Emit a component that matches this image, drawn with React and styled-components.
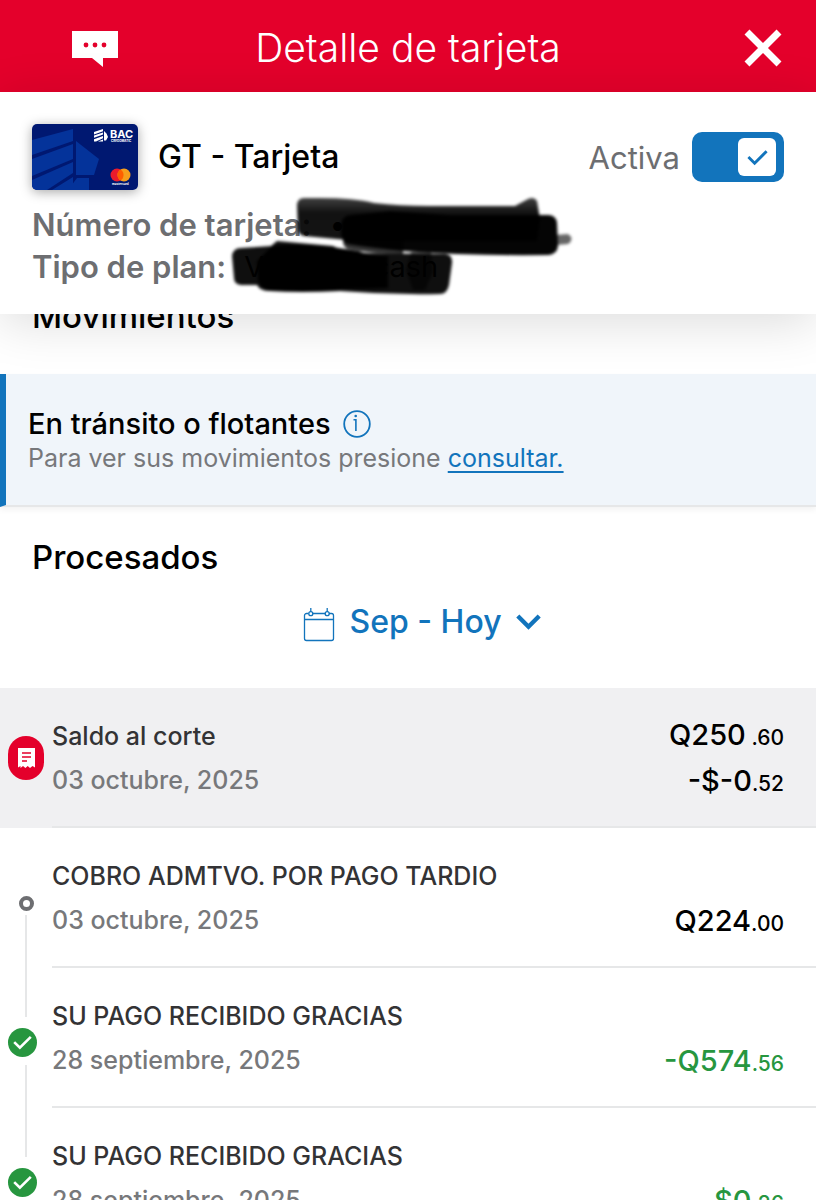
import React, { useState } from "react";
import styled, { createGlobalStyle, css } from "styled-components";

const movements = [
  {
    id: 1,
    kind: "cut",
    title: "Saldo al corte",
    date: "03 octubre, 2025",
    amounts: [
      ["Q250", " .60"],
      ["-$-0", ".52"],
    ],
  },
  {
    id: 2,
    kind: "charge",
    title: "COBRO ADMTVO. POR PAGO TARDIO",
    date: "03 octubre, 2025",
    amounts: [["Q224", ".00"]],
  },
  {
    id: 3,
    kind: "payment",
    title: "SU PAGO RECIBIDO GRACIAS",
    date: "28 septiembre, 2025",
    amounts: [["-Q574", ".56"]],
  },
  {
    id: 4,
    kind: "payment",
    title: "SU PAGO RECIBIDO GRACIAS",
    date: "28 septiembre, 2025",
    amounts: [["$0", ".26"]],
  },
];

// Icons
const ChatIcon = () => (
  <svg width="46" height="38" viewBox="0 0 46 38" aria-hidden="true">
    <path d="M0 2h46v27H31v9L20 29H0z" fill="#fff" />
    <g fill="#e4002b">
      <circle cx="14" cy="16" r="2.4" />
      <circle cx="23" cy="16" r="2.4" />
      <circle cx="32" cy="16" r="2.4" />
    </g>
  </svg>
);

const CloseIcon = () => (
  <svg width="38" height="38" viewBox="0 0 38 38" aria-hidden="true">
    <path d="M3 3l32 32M35 3L3 35" stroke="#fff" strokeWidth="7" />
  </svg>
);

const InfoIcon = () => (
  <svg width="28" height="28" viewBox="0 0 28 28" fill="none" aria-hidden="true">
    <circle cx="14" cy="14" r="12.8" stroke="#1274bc" strokeWidth="1.8" />
    <path d="M10.5 9.7h2.4V21" stroke="#1274bc" strokeWidth="1.6" />
    <circle cx="12.7" cy="6" r="1.3" fill="#1274bc" />
  </svg>
);

const CalendarIcon = () => (
  <svg
    width="32"
    height="40"
    viewBox="0 -6 32 40"
    fill="none"
    stroke="#1274bc"
    strokeWidth="1.3"
    aria-hidden="true"
  >
    <path d="M5.5 5.5h-2a2 2 0 0 0-2 2v23a2 2 0 0 0 2 2h25a2 2 0 0 0 2-2v-23a2 2 0 0 0-2-2h-2.5M9.5 5.5h13M1.5 11.5h29M7.8 0v4M24.2 0v4" />
    <circle cx="7.8" cy="5.7" r="2" />
    <circle cx="24.2" cy="5.7" r="2" />
  </svg>
);

const ChevronIcon = () => (
  <svg width="25" height="16" viewBox="0 0 25 16" fill="none" aria-hidden="true">
    <path d="M1.8 2l10.700 10.700L23.200 2" stroke="#1274bc" strokeWidth="4.4" />
  </svg>
);

const CheckIcon = ({ size, color, width }) => (
  <svg width={size} height={size} viewBox="0 0 24 24" fill="none" aria-hidden="true">
    <path d="M2.500 11.500l6.500 6.500L21.500 5.500" stroke={color} strokeWidth={width} />
  </svg>
);

const ReceiptIcon = () => (
  <svg width="17" height="22" viewBox="0 0 17 22" aria-hidden="true">
    <path
      d="M0 1h17v19.500l-2.500-1.500-2.500 2-2.300-2-2.300 2-2.400-2-2.500 2L2.500 19 0 20.500z"
      fill="#fff"
    />
    <path d="M4 6h9M4 10h9M4 14h5" stroke="#e4002b" strokeWidth="1.500" />
  </svg>
);

const CardArt = () => (
  <svg width="106" height="66" viewBox="0 0 106 66" role="img" aria-label="BAC">
    <defs>
      <clipPath id="card">
        <rect width="106" height="66" rx="5" />
      </clipPath>
    </defs>
    <g clipPath="url(#card)">
      <rect width="106" height="66" fill="#001871" />
      <g fill="#04339a">
        <path d="M0 16L41 5v12L0 31z" />
        <path d="M0 35l41-15v15L0 52z" />
        <path d="M0 56l41-18v11L15 66H0z" />
        <path d="M44 17l23 18-5 16H44z" />
        <path d="M20 66l21-13v13zM45 54h12v12H36z" />
      </g>
      <g fill="#fff">
        <path d="M62 8l9-3v2.200l-9 3.200zM62 11.600l9-3.200v2.200l-9 3.200zM62 15.200l9-3.200v2.200l-7 3.200h-2z" />
        <path d="M72 7l2.500 2.500L76 13l-2 3.500h-2zM66 17.500l5-2v2z" />
        <text
          x="78"
          y="14"
          fontFamily="Inter, sans-serif"
          fontSize="11"
          fontWeight="700"
        >
          BAC
        </text>
        <text x="79" y="18" fontFamily="Inter, sans-serif" fontSize="3" fontWeight="700">
          CREDOMATIC
        </text>
        <text x="80" y="61" fontFamily="Inter, sans-serif" fontSize="3" fontWeight="700">
          mastercard
        </text>
      </g>
      <circle cx="85" cy="51" r="6.500" fill="#eb1c2c" />
      <circle cx="92" cy="51" r="6.500" fill="#f79e1b" />
      <path d="M88.500 45.500a6.500 6.500 0 0 1 0 11a6.500 6.500 0 0 1 0-11z" fill="#ff5f00" />
    </g>
  </svg>
);

// Marker strokes that hide the private values
const Redaction = () => (
  <Scribble width="360" height="112" viewBox="0 0 360 112" aria-hidden="true">
    <defs>
      <filter id="soft" x="-5%" y="-10%" width="110%" height="120%">
        <feGaussianBlur stdDeviation="1.6" />
      </filter>
      <linearGradient id="ink" x1="0" y1="0" x2="0" y2="1">
        <stop offset="0" stopOpacity="0.75" />
        <stop offset="0.35" stopOpacity="0.93" />
        <stop offset="1" stopOpacity="0.92" />
      </linearGradient>
    </defs>
    <g filter="url(#soft)">
      <path
        d="M76 8h16q34 0 54 5 25 3 55 3h86l13-7q6-3 9 2l3 18-3 22H130l-54-5q-5-1-6-6l-1-24q0-8 7-8z"
        fill="url(#ink)"
      />
      <path d="M115 44h60v20q-30 0-55-5-5-2-5-8z" opacity="0.8" />
      <path d="M328 45l12-1q7 5 0 10l-12 1z" opacity="0.6" />
      <path
        d="M122 25l40-4 60 4h98q8 0 9 8l1 23q-1 8-9 9-80 1-146-4-30-3-56-7-7-2-6-20 1-8 9-9z"
        opacity="0.98"
      />
      <path
        d="M13 58l30-2 6-5 56 5 14 7 98 1q8 1 7 9l-3 22q-2 9-9 9-50 1-100-3-40 2-70 0-10 0-13-6H13q-7-1-7-7l-2-22q1-8 9-8z"
        opacity="0.94"
      />
      <path d="M44 56q28-3 60 1l26 4q8 4 30 5v32q-24 1-45 1-8 2-18 2H45q-12-1-15-10l-1-20z" />
      <path d="M183 62h20l2 20-8 18h-12l-7-20z" opacity="0.6" />
    </g>
  </Scribble>
);

const Marker = ({ kind }) => {
  if (kind === "cut") {
    return (
      <CutBadge>
        <ReceiptIcon />
      </CutBadge>
    );
  }
  if (kind === "payment") {
    return (
      <PaidBadge>
        <CheckIcon size={21} color="#fff" width={3} />
      </PaidBadge>
    );
  }
  return <Dot />;
};

const Movement = ({ kind, title, date, amounts }) => (
  <Row $shaded={kind === "cut"}>
    <Rail $kind={kind}>
      <Marker kind={kind} />
      {kind !== "cut" && <Line $long={kind === "charge"} />}
    </Rail>
    <RowBody>
      <div>
        <RowTitle>{title}</RowTitle>
        <RowDate>{date}</RowDate>
      </div>
      <Amounts $green={kind === "payment"}>
        {amounts.map(([whole, cents]) => (
          <Amount key={whole}>
            {whole}
            <small>{cents}</small>
          </Amount>
        ))}
      </Amounts>
    </RowBody>
  </Row>
);

export default function App() {
  const [active, setActive] = useState(true);

  return (
    <Screen>
      <GlobalStyle />
      <TopBar>
        <IconBtn aria-label="Chat">
          <ChatIcon />
        </IconBtn>
        <h1>Detalle de tarjeta</h1>
        <IconBtn aria-label="Cerrar">
          <CloseIcon />
        </IconBtn>
      </TopBar>

      <CardPanel>
        <CardHead>
          <CardThumb>
            <CardArt />
          </CardThumb>
          <h2>GT - Tarjeta</h2>
          <SwitchLabel>
            Activa
            <Switch
              type="checkbox"
              role="switch"
              checked={active}
              onChange={() => setActive(!active)}
            />
            <Track $on={active}>
              <Thumb>
                {active && <CheckIcon size={23} color="#1274bc" width={3} />}
              </Thumb>
            </Track>
          </SwitchLabel>
        </CardHead>
        <CardInfo>
          <InfoRow>
            Número de tarjeta: <Value>••</Value>
          </InfoRow>
          <InfoRow>
            Tipo de plan:
            <Value>
              <span>V</span>
              <span>cash</span>
            </Value>
          </InfoRow>
          <Redaction />
        </CardInfo>
      </CardPanel>

      <Content>
        <SectionTop>
          <h2>Movimientos</h2>
        </SectionTop>

        <Notice>
          <NoticeTitle>
            <h3>En tránsito o flotantes</h3>
            <InfoBtn aria-label="Información">
              <InfoIcon />
            </InfoBtn>
          </NoticeTitle>
          <p>
            Para ver sus movimientos presione <a href="#consultar">consultar.</a>
          </p>
        </Notice>

        <Processed>
          <h2>Procesados</h2>
          <PeriodBtn>
            <CalendarIcon />
            <span>Sep - Hoy</span>
            <ChevronIcon />
          </PeriodBtn>
        </Processed>

        <List>
          {movements.map((item) => (
            <Movement key={item.id} {...item} />
          ))}
        </List>
      </Content>
    </Screen>
  );
}

const GlobalStyle = createGlobalStyle`
  * {
    box-sizing: border-box;
  }
  body {
    margin: 0;
    background-color: #fff;
    color: #000;
    font-family: Inter, "Liberation Sans", sans-serif;
  }
  h1, h2, h3, p, ul {
    margin: 0;
    padding: 0;
  }
  h2 {
    font-size: 33px;
    line-height: 40px;
    font-weight: 550;
  }
  button {
    padding: 0;
    border: none;
    background: none;
    font: inherit;
    cursor: pointer;
  }
  svg {
    display: block;
  }
`;

const Screen = styled.div`
  display: flex;
  flex-direction: column;
  height: 100vh;
  overflow: hidden;
`;

const TopBar = styled.header`
  display: grid;
  grid-template-columns: 1fr auto 1fr;
  flex-shrink: 0;
  align-items: center;
  padding: 24px 34px 20px;
  background-color: #e4002b;
  color: #fff;
  h1 {
    font-size: 39px;
    line-height: 48px;
    font-weight: 300;
  }
`;

const IconBtn = styled.button`
  display: flex;
  justify-self: end;
  &:first-child {
    justify-self: start;
    margin-left: 38px;
  }
`;

const CardPanel = styled.section`
  position: relative;
  z-index: 1;
  flex-shrink: 0;
  padding: 32px 32px 26px;
  background-color: #fff;
  box-shadow: 0 8px 48px rgba(0, 0, 0, 0.14);
`;

const CardHead = styled.div`
  display: flex;
  align-items: center;
  gap: 20px;
  h2 {
    font-size: 32px;
  }
`;

const CardThumb = styled.div`
  border-radius: 5px;
  box-shadow: 0 2px 12px rgba(0, 0, 0, 0.35);
`;

const SwitchLabel = styled.label`
  display: flex;
  align-items: center;
  gap: 12px;
  margin-left: auto;
  color: #6d6e71;
  font-size: 31px;
  cursor: pointer;
`;

const Switch = styled.input`
  position: absolute;
  opacity: 0;
`;

const Track = styled.span`
  display: flex;
  align-items: center;
  justify-content: ${({ $on }) => ($on ? "flex-end" : "flex-start")};
  width: 92px;
  height: 50px;
  padding: 0 8px;
  border-radius: 10px;
  background-color: ${({ $on }) => ($on ? "#1274bc" : "#a7a9ac")};
`;

const Thumb = styled.span`
  display: flex;
  align-items: center;
  justify-content: center;
  width: 38px;
  height: 38px;
  border-radius: 6px;
  background-color: #fff;
`;

const CardInfo = styled.div`
  position: relative;
  padding-top: 14px;
  color: #6d6e71;
  font-size: 31px;
  line-height: 42px;
  font-weight: 600;
`;

const InfoRow = styled.p`
  display: flex;
  gap: 18px;
`;

const Value = styled.span`
  display: flex;
  justify-content: space-between;
  width: 194px;
  color: #000;
  font-size: 29px;
  font-weight: 400;
`;

const Scribble = styled.svg`
  position: absolute;
  top: 0;
  left: 196px;
`;

const Content = styled.main`
  flex: 1;
  min-height: 0;
  overflow: hidden;
`;

const SectionTop = styled.div`
  margin-top: -18px;
  padding: 0 32px 38px;
`;

const Notice = styled.section`
  padding: 31px 22px 32px;
  border-left: 6px solid #1274bc;
  border-bottom: 2px solid #e6e7e8;
  background-color: #f0f5fa;
  box-shadow: 0 3px 6px rgba(0, 0, 0, 0.05);
  color: #77787b;
  font-size: 25px;
  line-height: 30px;
  a {
    color: #1274bc;
    text-underline-offset: 4px;
  }
`;

const NoticeTitle = styled.div`
  display: flex;
  align-items: center;
  gap: 12px;
  h3 {
    color: #000;
    font-size: 29px;
    line-height: 38px;
    font-weight: 550;
  }
`;

const InfoBtn = styled.button`
  display: flex;
`;

const Processed = styled.section`
  display: flex;
  flex-direction: column;
  padding: 30px 32px 45px;
`;

const PeriodBtn = styled.button`
  display: flex;
  align-items: center;
  align-self: center;
  gap: 14px;
  margin-top: 24px;
  padding-left: 28px;
  color: #1274bc;
  span {
    font-size: 32px;
    line-height: 42px;
    font-weight: 550;
  }
`;

const List = styled.ul`
  list-style: none;
`;

const Row = styled.li`
  display: flex;
  height: 140px;
  background-color: ${({ $shaded }) => ($shaded ? "#f0f0f2" : "transparent")};
`;

const markerTop = { cut: 48, charge: 68, payment: 60 };

const Rail = styled.div`
  display: flex;
  flex-direction: column;
  flex-shrink: 0;
  align-items: center;
  gap: ${({ $kind }) => ($kind === "charge" ? 4 : 8)}px;
  width: 52px;
  padding-top: ${({ $kind }) => markerTop[$kind]}px;
`;

const badge = css`
  display: flex;
  flex-shrink: 0;
  align-items: center;
  justify-content: center;
`;

const CutBadge = styled.span`
  ${badge}
  width: 36px;
  height: 44px;
  border-radius: 18px;
  background-color: #e4002b;
`;

const PaidBadge = styled.span`
  ${badge}
  align-self: flex-start;
  width: 29px;
  height: 29px;
  margin-left: 8px;
  border-radius: 50%;
  background-color: #27963f;
`;

const Dot = styled.span`
  flex-shrink: 0;
  width: 15px;
  height: 15px;
  border: 4px solid #6d6e71;
  border-radius: 50%;
`;

const Line = styled.span`
  width: 2px;
  height: ${({ $long }) => ($long ? 102 : 92)}px;
  flex-shrink: 0;
  background-color: #e6e7e8;
`;

const RowBody = styled.div`
  display: flex;
  flex: 1;
  justify-content: space-between;
  padding: 26px 32px 0 0;
  border-bottom: 2px solid #e6e7e8;
`;

const RowTitle = styled.p`
  color: #333335;
  font-size: 25px;
  line-height: 44px;
  font-weight: 500;
`;

const RowDate = styled.p`
  color: #77787b;
  font-size: 25px;
  line-height: 44px;
  font-weight: 500;
`;

const Amounts = styled.div`
  display: flex;
  flex-direction: column;
  justify-content: flex-end;
  padding-bottom: 22px;
  text-align: right;
  color: ${({ $green }) => ($green ? "#27963f" : "#000")};
`;

const Amount = styled.p`
  font-size: 29px;
  line-height: 46px;
  font-weight: 550;
  white-space: pre;
  small {
    font-size: 21px;
    line-height: 1;
  }
`;
